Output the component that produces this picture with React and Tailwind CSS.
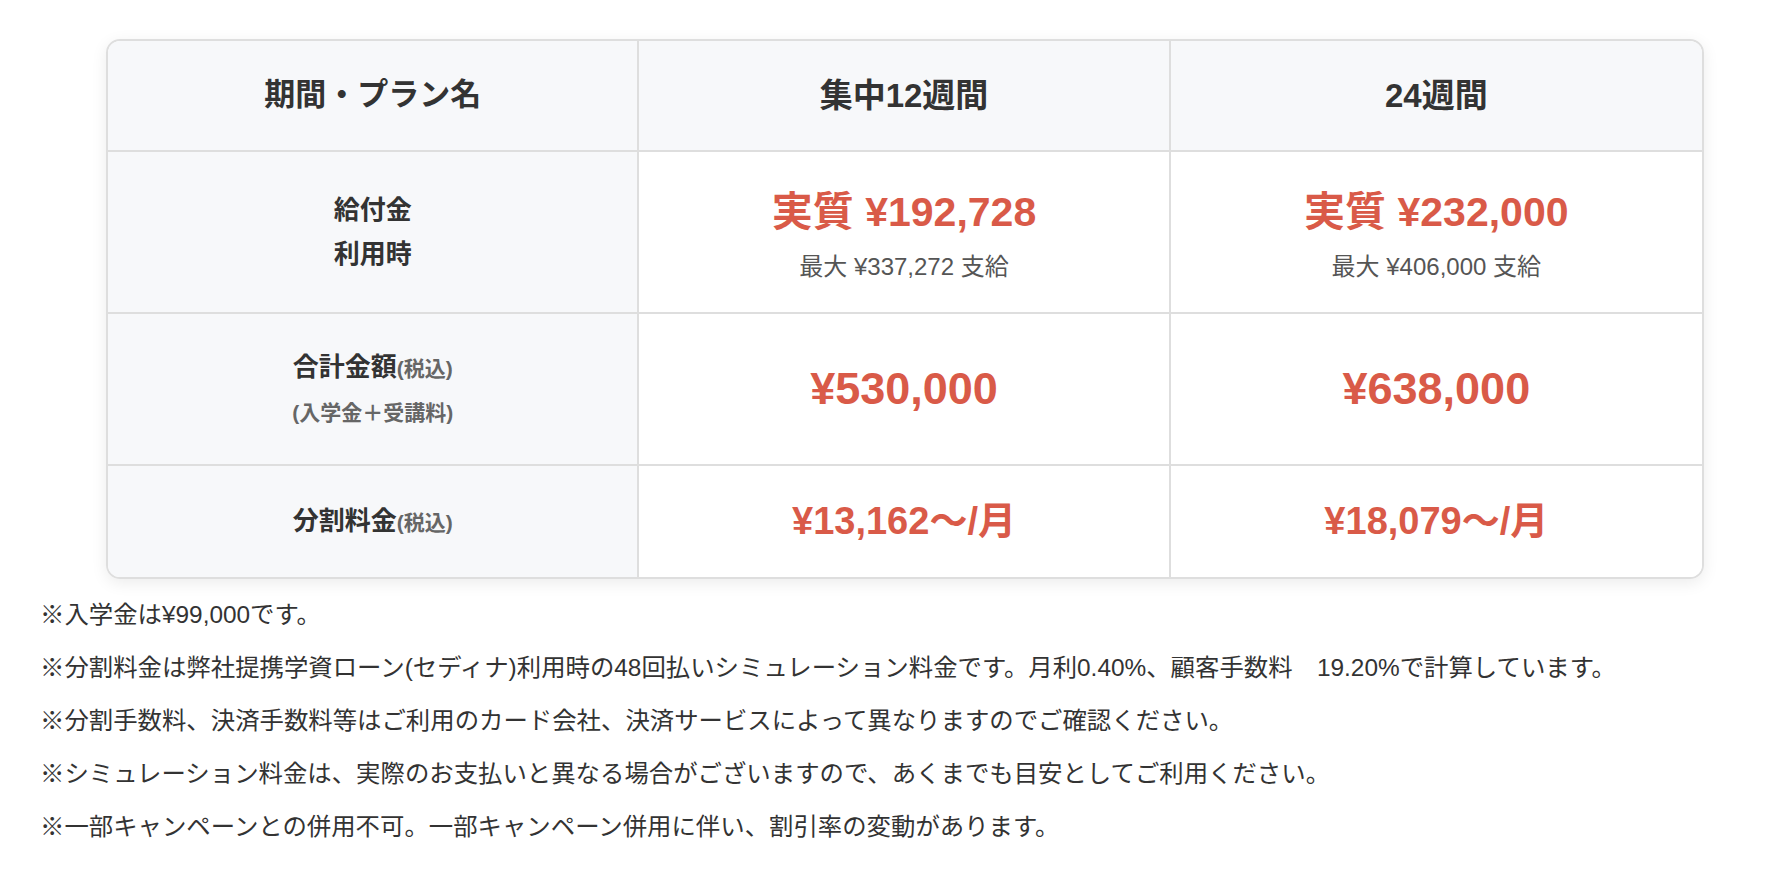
import React from "react";

const FONT = "font-['Liberation_Sans','Noto_Sans_CJK_JP',sans-serif]";

const NOTES = [
  "※入学金は¥99,000です。",
  "※分割料金は弊社提携学資ローン(セディナ)利用時の48回払いシミュレーション料金です。月利0.40%、顧客手数料　19.20%で計算しています。",
  "※分割手数料、決済手数料等はご利用のカード会社、決済サービスによって異なりますのでご確認ください。",
  "※シミュレーション料金は、実際のお支払いと異なる場合がございますので、あくまでも目安としてご利用ください。",
  "※一部キャンペーンとの併用不可。一部キャンペーン併用に伴い、割引率の変動があります。",
];

function Row({ h, label, cells, last }) {
  return (
    <div className={`grid grid-cols-3 ${h} ${last ? "" : "border-b-2 border-[#dedede]"}`}>
      <div className="flex flex-col items-center justify-center bg-[#f7f8fa] border-r-2 border-[#dedede] text-center">
        {label}
      </div>
      {cells.map((c, i) => (
        <div
          key={i}
          className={`flex flex-col items-center justify-center bg-white text-center ${i === 0 ? "border-r-2 border-[#dedede]" : ""}`}
        >
          {c}
        </div>
      ))}
    </div>
  );
}

export default function App() {
  return (
    <div className={`min-h-screen bg-white ${FONT} text-[#333333] pt-[39px] px-[40px]`}>
      {/* Price table */}
      <div className="ml-[66px] w-[1598px] rounded-[14px] border-2 border-[#dedede] overflow-hidden shadow-[0_4px_16px_rgba(0,0,0,0.08)]">
        <div className="grid grid-cols-3 h-[111px] bg-[#f7f8fa] border-b-2 border-[#dedede]">
          <div className="flex items-center justify-center border-r-2 border-[#dedede] text-[31px] font-bold">
            期間・プラン名
          </div>
          <div className="flex items-center justify-center border-r-2 border-[#dedede] text-[33px] font-bold">
            集中12週間
          </div>
          <div className="flex items-center justify-center text-[33px] font-bold">24週間</div>
        </div>

        <Row
          h="h-[162px]"
          label={
            <p className="text-[26px] font-bold leading-[44px]">
              給付金
              <br />
              利用時
            </p>
          }
          cells={[
            ["実質 ¥192,728", "最大 ¥337,272 支給"],
            ["実質 ¥232,000", "最大 ¥406,000 支給"],
          ].map(([a, b]) => (
            <>
              <p className="text-[41px] font-bold text-[#d95a48] leading-[52px] mt-[6px]">{a}</p>
              <p className="text-[24px] text-[#555555] leading-[34px] mt-[12px]">{b}</p>
            </>
          ))}
        />

        <Row
          h="h-[152px]"
          label={
            <>
              <p className="leading-[44px]">
                <span className="text-[26px] font-bold">合計金額</span>
                <span className="text-[21px] font-bold text-[#666666]">(税込)</span>
              </p>
              <p className="text-[21px] font-bold text-[#666666] leading-[40px]">(入学金＋受講料)</p>
            </>
          }
          cells={["¥530,000", "¥638,000"].map((v) => (
            <p className="text-[45px] font-bold text-[#d95a48]">{v}</p>
          ))}
        />

        <Row
          h="h-[111px]"
          last
          label={
            <p>
              <span className="text-[26px] font-bold">分割料金</span>
              <span className="text-[21px] font-bold text-[#666666]">(税込)</span>
            </p>
          }
          cells={["¥13,162〜/月", "¥18,079〜/月"].map((v) => (
            <p className="text-[38px] font-bold text-[#d95a48]">{v}</p>
          ))}
        />
      </div>

      {/* Notes */}
      <div className="mt-[9px] text-[24.4px] text-[#333333]">
        {NOTES.map((n) => (
          <p key={n} className="leading-[53px] whitespace-nowrap">
            {n}
          </p>
        ))}
      </div>
    </div>
  );
}
